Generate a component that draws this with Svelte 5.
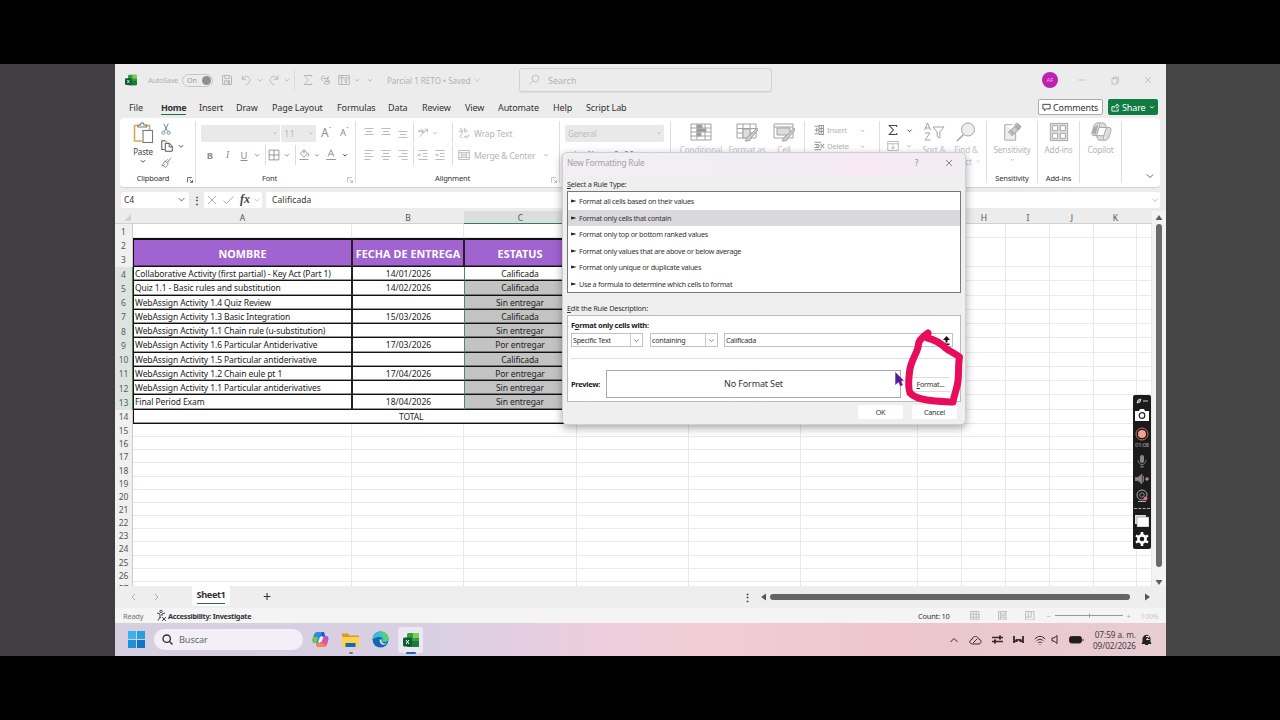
<script lang="ts">
  type Cell = { icon?: string; w: number; text?: string; tone?: string };

  const tabs = [
    { name: 'File', w: 32 },
    { name: 'Home', w: 38 },
    { name: 'Insert', w: 37 },
    { name: 'Draw', w: 36 },
    { name: 'Page Layout', w: 65 },
    { name: 'Formulas', w: 51 },
    { name: 'Data', w: 34 },
    { name: 'Review', w: 43 },
    { name: 'View', w: 33 },
    { name: 'Automate', w: 55 },
    { name: 'Help', w: 33 },
    { name: 'Script Lab', w: 50 },
  ];

  const quickTools: Cell[] = [
    { icon: 'save', w: 18 },
    { icon: 'undo', w: 20 },
    { icon: 'caret', w: 7 },
    { icon: 'redo', w: 21 },
    { icon: 'caret', w: 5 },
    { icon: 'sep', w: 10 },
    { icon: 'sigma', w: 17 },
    { icon: 'link', w: 20 },
    { icon: 'freeze', w: 16 },
    { icon: 'caret', w: 10 },
    { icon: 'caret', w: 16 },
  ];

  const fontRow: Cell[] = [
    { text: 'B', w: 18, tone: 'bold' },
    { text: 'I', w: 17, tone: 'italic' },
    { text: 'U', w: 16, tone: 'underline' },
    { icon: 'caret', w: 10 },
    { icon: 'sep', w: 7 },
    { icon: 'borders', w: 10, tone: 'mid' },
    { icon: 'caret', w: 15 },
    { icon: 'sep', w: 2 },
    { icon: 'bucket', w: 16, tone: 'mid' },
    { icon: 'caret', w: 10 },
    { icon: 'fontColor', w: 18, tone: 'mid' },
    { icon: 'caret', w: 9, tone: 'dark' },
  ];

  const alignRows: Cell[][] = [
    [
      { icon: 'alignTop', w: 17 },
      { icon: 'alignTop', w: 18 },
      { icon: 'alignBottom', w: 16 },
      { icon: 'sep', w: 4 },
      { icon: 'orient', w: 16 },
      { icon: 'caret', w: 8 },
      { w: 12 },
      { icon: 'sep', w: 3 },
      { icon: 'wrap', w: 20 },
      { text: 'Wrap Text', w: 60, tone: 'label' },
    ],
    [
      { icon: 'alignLeft', w: 17 },
      { icon: 'alignCenter', w: 18 },
      { icon: 'alignRight', w: 16 },
      { icon: 'sep', w: 4 },
      { icon: 'outdent', w: 16 },
      { icon: 'indent', w: 18 },
      { w: 2 },
      { icon: 'sep', w: 3 },
      { icon: 'merge', w: 20 },
      { text: 'Merge & Center', w: 66, tone: 'label' },
      { icon: 'caret', w: 12 },
    ],
  ];

  const columns = [
    { name: 'A', w: 219 },
    { name: 'B', w: 112 },
    { name: 'C', w: 113 },
    { name: 'D', w: 112 },
    { name: 'E', w: 112 },
    { name: 'F', w: 117 },
    { name: 'G', w: 44 },
    { name: 'H', w: 44 },
    { name: 'I', w: 44 },
    { name: 'J', w: 44 },
    { name: 'K', w: 43 },
    { name: '', w: 15 },
  ];
  const restColumns = columns.slice(3);

  const activities = [
    ['Collaborative Activity (first partial) - Key Act (Part 1)', '14/01/2026', 'Calificada'],
    ['Quiz 1.1 - Basic rules and substitution', '14/02/2026', 'Calificada'],
    ['WebAssign Activity 1.4 Quiz Review', '', 'Sin entregar'],
    ['WebAssign Activity 1.3 Basic Integration', '15/03/2026', 'Calificada'],
    ['WebAssign Activity 1.1 Chain rule (u-substitution)', '', 'Sin entregar'],
    ['WebAssign Activity 1.6 Particular Antiderivative', '17/03/2026', 'Por entregar'],
    ['WebAssign Activity 1.5 Particular antiderivative', '', 'Calificada'],
    ['WebAssign Activity 1.2 Chain eule pt 1', '17/04/2026', 'Por entregar'],
    ['WebAssign Activity 1.1 Particular antiderivatives', '', 'Sin entregar'],
    ['Final Period Exam', '18/04/2026', 'Sin entregar'],
  ];
  const emptyRows = Array.from({ length: 13 }, (_, i) => i + 15);

  const ruleTypes = [
    'Format all cells based on their values',
    'Format only cells that contain',
    'Format only top or bottom ranked values',
    'Format only values that are above or below average',
    'Format only unique or duplicate values',
    'Use a formula to determine which cells to format',
  ];
  let selectedRule = $state(1);

  // 16x16 stroke icons
  const icons: Record<string, string> = {
    caret: 'M5.5 7l2.5 2.5L10.500 7',
    chevron: 'M3 5.500l5 5 5-5',
    save: 'M2 2h10l2 2v10H2zM5 2v4h6V2M4.500 14V9h7v5M10 9v5M7 11h2',
    undo: 'M3 2v5h5M3 7c2-4 6-5 9-2s1 6-4 10',
    redo: 'M13 2v5H8M13 7c-2-4-6-5-9-2s-1 6 4 10',
    sigma: 'M13 4V2H3l5.500 6L3 14h10v-2',
    link: 'M6 3a3 3 0 1 0-2 6M4 6h7M9 4l2 2-2 2M10 8a3 3 0 1 1-3 4M13 10H7l2-2M6 13v-3M11 3v3',
    freeze: 'M1 2h14v12H1zM1 5h14M5 2v12M8 8h5M10.500 7v5M9 10.500l1.500 1.500 1.500-1.500',
    search: 'M10 1.500a4.500 4.500 0 1 1 0 9 4.500 4.500 0 0 1 0-9M6.500 9.500L1.500 14.500',
    scissors: 'M5 1l5 10M11 1L6 11M4.500 11a2 2 0 1 0 .1 0M11.500 11a2 2 0 1 0 .1 0',
    copy: 'M5 12H2V2h4l2 2M6 5h5l3 3v6H6zM10.500 5v4H14',
    brush: 'M14 2l-4 4M7 5l4 4M6 6l4 4-3 4-5-3c2-1 3-3 4-5M4 12l2-2M9 4l3 3',
    borders: 'M1.500 1.500h13v13h-13zM8 1.500v13M1.500 8h13',
    bucket: 'M8 1l5 5-5 5-5-5zM8 1v5M13 6c2 2 1 4 0 4M2 14h12',
    fontColor: 'M4 10L8 1l4 9M5.500 7h5M1.500 14h13',
    alignTop: 'M2 2h12M4 6h8M2 10h12',
    alignBottom: 'M2 6h12M4 10h8M2 14h12',
    alignLeft: 'M2 2h12M2 6h8M2 10h12M2 14h8',
    alignCenter: 'M2 2h12M4 6h8M2 10h12M4 14h8',
    alignRight: 'M2 2h12M6 6h8M2 10h12M6 14h8',
    outdent: 'M2 2h12M8 6h6M8 10h6M2 14h12M6 8H1M3 6L1 8l2 2',
    indent: 'M2 2h12M8 6h6M8 10h6M2 14h12M1 8h5M4 6l2 2-2 2',
    orient: 'M3 13L14 3M14 3h-4M14 3v4M2 7c0-4 4-4 4 0M2 6h4M7 3v5M7 5c3-1 3 3 0 3',
    wrap: 'M2 3c2-2 4 0 4 4H3c-2-1 0-3 3-2M9 1v6M9 4c4-1 4 3 0 3M6 10c-4-1-4 5 0 4M9 13h4c2 0 2-3 0-3M11 11l-2 2 2 2',
    merge: 'M1 2h14v12H1zM1 5h14M1 11h14M5 5v6M11 5v6M4 8h8',
    launcher: 'M3 13V3h9M7 7l6 6M13 8v5H8',
    insertCells: 'M2 3h5M2 8h3M2 13h5M8 2h6v12H8zM11 2v12M8 6h6M8 10h6M2 8h6M5 5v6',
    deleteCells: 'M2 3h9M2 6h6M2 10h6M2 13h9M4 8h6M10 5l5 6M15 5l-5 6',
    fill: 'M1 2h14v12H1zM1 5h14M8 6v6M5.500 9.500L8 12l2.500-2.500',
  };
</script>

{#snippet icon(name: string, size = 12, width = 1.2)}
  {#if name === 'sep'}
    <i class="sep"></i>
  {:else}
    <svg class="icon" width={size} height={size} viewBox="0 0 16 16" stroke-width={(width * 12) / size}>
      <path d={icons[name]} />
    </svg>
  {/if}
{/snippet}

{#snippet cells(list: Cell[])}
  {#each list as cell}
    <span class="cell {cell.tone ?? ''}" style:width="{cell.w}px">
      {#if cell.icon}{@render icon(cell.icon)}{:else}{cell.text ?? ''}{/if}
    </span>
  {/each}
{/snippet}

{#snippet excelLogo(size: number)}
  <svg width={size} height={size} viewBox="0 0 16 16">
    <rect x="4" y="1" width="12" height="14" rx="1.500" fill="#2f9e44" />
    <path d="M10 1h4.500A1.500 1.500 0 0 1 16 2.500V6h-6z" fill="#7bd24f" />
    <path d="M4 9h12v4.500a1.500 1.500 0 0 1-1.500 1.500h-9A1.500 1.500 0 0 1 4 13.500z" fill="#197a3a" />
    <rect x="0" y="5.500" width="9" height="9" rx="1.500" fill="#0d5c2d" />
    <path d="M3 8l3 4M6 8l-3 4" stroke="#fff" stroke-width="1" />
  </svg>
{/snippet}

{#snippet gridLines(cols: { name: string; w: number }[])}
  {#each cols as col}
    <span class="blank" style:width="{col.w}px"></span>
  {/each}
{/snippet}

<div class="stage">
  <main class="window">
    <header class="titlebar">
      <span class="app-logo">{@render excelLogo(12)}</span>
      <span class="autosave">AutoSave</span>
      <span class="toggle">On <b></b></span>
      <div class="quick">{@render cells(quickTools)}</div>
      <span class="doc-name">Parcial 1 RETO • Saved</span>
      <span class="doc-caret">{@render icon('chevron', 8, 0.8)}</span>
      <div class="search">{@render icon('search', 12, 1)}<span>Search</span></div>
      <span class="avatar">AF</span>
      <div class="controls">
        <svg viewBox="0 0 10 10"><path d="M1.500 5h7" /></svg>
        <svg viewBox="0 0 10 10"><path d="M2 3.500h5V9H2zM3.500 3.500V2h5v5.500H7" /></svg>
        <svg viewBox="0 0 10 10"><path d="M2 2l6 6M8 2L2 8" /></svg>
      </div>
    </header>

    <nav class="tabs">
      {#each tabs as tab}
        <span class="tab" style:width="{tab.w}px"><span class:active={tab.name === 'Home'}>{tab.name}</span></span>
      {/each}
      <button class="comments">
        <svg width="9" height="9" viewBox="0 0 10 10"><path d="M1 1.500h8v5H5L3 8.500v-2H1z" /></svg>Comments
      </button>
      <button class="share">
        <svg width="9" height="9" viewBox="0 0 10 10"><path d="M3.500 4H1v5h7V6.500M3.500 6c0-2 1-3 3-3V1L9 3.500 6.500 6V4.500" /></svg>Share
        {@render icon('caret', 12, 1.200)}
      </button>
    </nav>

    <section class="ribbon">
      <div class="group clipboard">
        <div class="body">
          <div class="paste">
            <svg width="21" height="22" viewBox="0 0 21 22" fill="none">
              <path d="M9 19H1.500V3.500H5M13 3.500h3.500V8" stroke="#dba65c" stroke-width="1.600" />
              <path d="M5 5V3h2.500c0-3 3.500-3 3.500 0H13.500v2z" stroke="#777" stroke-width="1.100" />
              <rect x="10" y="8.500" width="9.500" height="12" fill="#fff" stroke="#777" stroke-width="1.100" />
            </svg>
            <span>Paste</span>
            {@render icon('caret', 14)}
          </div>
          <div class="clip-tools">
            <span class="cut">{@render icon('scissors', 12)}</span>
            <span>{@render icon('copy', 14)}{@render icon('caret', 14)}</span>
            <span class="painter">{@render icon('brush', 13)}</span>
          </div>
        </div>
        <footer>Clipboard<span class="launch dark">{@render icon('launcher', 8, 0.9)}</span></footer>
      </div>

      <div class="group font">
        <div class="row fields">
          <span class="field family">{@render icon('caret', 10)}</span>
          <span class="field size">11{@render icon('caret', 10)}</span>
          <span class="grow">A<sup>ˆ</sup></span>
          <span class="grow small">A<sup>ˇ</sup></span>
        </div>
        <div class="row">{@render cells(fontRow)}</div>
        <footer>Font<span class="launch">{@render icon('launcher', 8, 0.9)}</span></footer>
      </div>

      <div class="group alignment">
        {#each alignRows as row}
          <div class="row">{@render cells(row)}</div>
        {/each}
        <footer>Alignment<span class="launch">{@render icon('launcher', 8, 0.9)}</span></footer>
      </div>

      <div class="group number">
        <div class="row fields"><span class="field general">General{@render icon('caret', 10)}</span></div>
        <div class="row money">$ &nbsp;&nbsp; % &nbsp; , &nbsp; .0 .00</div>
      </div>

      <div class="group styles">
        <span class="big">
          <svg width="22" height="20" viewBox="0 0 22 20"><path d="M1 2h20v16H1zM1 6h20M1 10h20M1 14h20M7 2v16M15 2v16" /><path d="M7 3h5v3H7zM7 7h9v2.500H7zM7 11h4v3H7z" fill="#999" /></svg>
          Conditional
        </span>
        <span class="big">
          <svg width="22" height="20" viewBox="0 0 22 20"><path d="M1 2h19v14H1zM1 6.500h19M1 11h19M7 2v14M14 2v14" /><path d="M7 7h7v9H7z" fill="#ddd" /><path d="M21 6l-8 8c-2 0-2 3-4 5 3 0 6 0 6-3l7-8z" fill="#ccc" /></svg>
          Format as
        </span>
        <span class="big">
          <svg width="22" height="20" viewBox="0 0 22 20"><path d="M1 2h19v14H1zM1 5h19" /><path d="M4 6h13v7H4z" fill="#ddd" /><path d="M21 6l-8 8c-2 0-2 3-4 5 3 0 6 0 6-3l7-8z" fill="#ccc" /></svg>
          Cell
        </span>
      </div>

      <div class="group cellops">
        <div class="line">{@render icon('insertCells', 12, 1.400)}<span>Insert</span>{@render icon('caret', 11)}</div>
        <div class="line">{@render icon('deleteCells', 12, 1.400)}<span>Delete</span>{@render icon('caret', 11)}</div>
      </div>

      <div class="group editing">
        <div class="edit-col">
          <div class="line dark">{@render icon('sigma', 12, 1.400)}{@render icon('caret', 13)}</div>
          <div class="line">{@render icon('fill', 12, 1.200)}{@render icon('caret', 12)}</div>
        </div>
        <span class="big sort">
          <svg width="22" height="20" viewBox="0 0 22 20"><path d="M1.500 8L4.500 1l3 7M2.500 6h4M2 11h5L2 18h5.500M10 5h11l-4.200 5v6l-2.600-1.500V10z" /></svg>
          Sort &amp;
        </span>
        <span class="big">
          <svg width="22" height="20" viewBox="0 0 22 20"><circle cx="13" cy="7.500" r="6.500" fill="#eee" /><path d="M8.500 12.500L2 19" stroke-width="1.500" /></svg>
          Find &amp;<span>Select {@render icon('caret', 8)}</span>
        </span>
      </div>

      <div class="group sensitivity">
        <span class="big">
          <svg width="22" height="22" viewBox="0 0 22 22"><path d="M3 3h8M15 11v9H3V3" fill="#eee" /><path d="M7 11l7-6 4 4-7 6zM13 4l3-3 5 4-3 4" fill="#ccc" /><path d="M9 9l4 4M15 4l4 4M17 2l3 4" stroke-width="1.600" /></svg>
          Sensitivity{@render icon('caret', 11)}
        </span>
        <footer>Sensitivity</footer>
      </div>

      <div class="group addins">
        <span class="big">
          <svg width="22" height="22" viewBox="0 0 22 22"><path d="M1.500 1.500h19v19h-19z" fill="#ddd" /><path d="M4 4h5.500v5.500H4zM12.500 4H18v5.500h-5.500zM4 12.500h5.500V18H4zM12.500 12.500H18V18h-5.500z" fill="#fff" /></svg>
          Add-ins
        </span>
        <footer>Add-ins</footer>
      </div>

      <div class="group copilot">
        <span class="big">
          <svg width="24" height="22" viewBox="0 0 24 22"><path d="M8 1h7c2 0 2 4 3 5h3c3 0 2 4 1 7s-2 7-5 7h-7c-2 0-2-3-3-5H4c-3 0-2-4-1-7s2-7 5-7z" fill="#ddd" /><path d="M10 6h8l-3 9H7zM10 6c1-3 0-5-2-5M15 15c-1 3 0 5 2 5" fill="#fff" /><path d="M4 6l-2 6 4 2 3-11z" fill="#aaa" stroke="none" /></svg>
          Copilot
        </span>
      </div>
      <span class="collapse">{@render icon('chevron', 10, 1.100)}</span>
    </section>

    <section class="formula">
      <div class="name-box">C4{@render icon('chevron', 9, 1)}</div>
      <span class="grip">⋮</span>
      <div class="fx">
        <svg width="10" height="10" viewBox="0 0 10 10"><path d="M1 1l8 8M9 1L1 9" /></svg>
        <svg width="11" height="10" viewBox="0 0 11 10"><path d="M0.500 5.500l3 3L10.500 1.500" /></svg>
        <em>fx</em>{@render icon('chevron', 8, 0.9)}
      </div>
      <div class="value">Calificada{@render icon('chevron', 8, 0.9)}</div>
    </section>

    <section class="sheet">
      <div class="grid">
        <div class="col-heads">
          <span class="corner"><svg width="7" height="7" viewBox="0 0 7 7"><path d="M7 0v7H0z" /></svg></span>
          {#each columns as col}
            <span class="col-head" class:picked={col.name === 'C'} style:width="{col.w}px">{col.name}</span>
          {/each}
        </div>
        <div class="line-row first">
          <span class="num">1</span>
          {@render gridLines(columns)}
        </div>
        <div class="line-row head">
          <span class="num double"><span>2</span><span>3</span></span>
          <span class="th name">NOMBRE</span>
          <span class="th date">FECHA DE ENTREGA</span>
          <span class="th state">ESTATUS</span>
          {@render gridLines(restColumns)}
        </div>
        {#each activities as [name, date, state], i}
          <div class="line-row item">
            <span class="num picked">{i + 4}</span>
            <span class="td name">{name}</span>
            <span class="td date">{date}</span>
            <span class="td state" class:shaded={i > 0}>{state}</span>
            {@render gridLines(restColumns)}
          </div>
        {/each}
        <div class="line-row total">
          <span class="num">14</span>
          <span class="td sum">TOTAL</span>
          {@render gridLines(restColumns)}
        </div>
        {#each emptyRows as n}
          <div class="line-row empty">
            <span class="num">{n}</span>
            {@render gridLines(columns)}
          </div>
        {/each}
      </div>
      <div class="vscroll">
        <svg width="8" height="6" viewBox="0 0 8 6"><path d="M4 0l3.500 5h-7z" /></svg>
        <i></i>
        <svg width="8" height="6" viewBox="0 0 8 6"><path d="M4 6L.5 1h7z" /></svg>
      </div>
    </section>

    <footer class="sheet-tabs">
      <svg width="30" height="8" viewBox="0 0 30 8"><path d="M5 1L2 4l3 3M25 1l3 3-3 3" /></svg>
      <span class="sheet-tab"><span>Sheet1</span></span>
      <span class="plus">+</span>
      <span class="dots">⋮</span>
      <div class="hscroll">
        <svg width="5" height="8" viewBox="0 0 5 8"><path d="M5 .5v7L0 4z" /></svg>
        <i></i>
        <svg width="5" height="8" viewBox="0 0 5 8"><path d="M0 .5v7L5 4z" /></svg>
      </div>
    </footer>

    <footer class="statusbar">
      <span class="ready">Ready</span>
      <svg width="11" height="11" viewBox="0 0 11 11"><circle cx="5" cy="1.500" r="1.200" /><path d="M1 3l3 1v3l-2 3.500M9 3L6 4v2M4 7l1 1M6 7l4 4M10 7l-4 4" /></svg>
      <span class="access">Accessibility: Investigate</span>
      <span class="count">Count: 10</span>
      <div class="views">
        <svg viewBox="0 0 10 10"><path d="M.5.500h9v9h-9zM.5 3.500h9M.5 6.500h9M3.500.500v9M6.500.500v9" /></svg>
        <svg viewBox="0 0 10 10"><path d="M.5.500h9v9h-9zM2.500 1v8M7.500 1v8M3 3h4M3 5h4M3 7h4" /></svg>
        <svg viewBox="0 0 10 10"><path d="M.5.500h9v9h-9zM3.500 1v5.500h3V1M1 6.500h2.500" /></svg>
      </div>
      <div class="zoom">
        <span>−</span>
        <svg width="68" height="5" viewBox="0 0 68 5"><path d="M0 2.500h68M34.500 0.500v4" /></svg>
        <span>+</span>
      </div>
      <span class="percent">100%</span>
    </footer>

    <footer class="taskbar">
      <svg class="start" width="17" height="17" viewBox="0 0 17 17">
        <path d="M0 0h8v8H0z" fill="#35b5ea" /><path d="M9 0h8v8H9z" fill="#249fe0" />
        <path d="M0 9h8v8H0z" fill="#1d91d8" /><path d="M9 9h8v8H9z" fill="#0f76c6" />
      </svg>
      <div class="find">
        <svg width="11" height="11" viewBox="0 0 11 11"><circle cx="4.700" cy="4.700" r="3.700" /><path d="M7.500 7.500L10.500 10.500" /></svg>Buscar
      </div>
      <div class="apps">
        <span>
          <svg width="17" height="17" viewBox="0 0 17 17">
            <path d="M6 1h5c1.500 0 1.500 2 2 4H9L6.500 12H3C0 12 0 9 1.500 5S4 1 6 1z" fill="#2a8ee0" />
            <path d="M1.200 6h5L4.500 12H3C0 12 0 9 1.200 6z" fill="#79c74a" />
            <path d="M11 1c1.500 0 1.500 2 2 4H9l1-4z" fill="#2457c5" />
            <path d="M11 16H6c-1.500 0-1.500-2-2-4h4l2.500-7H14c3 0 3 3 1.500 7S13 16 11 16z" fill="#e0569a" />
            <path d="M11 16H6c-1.500 0-1.500-2-2-4h4.500l5 1.500c-1 2-1.500 2.500-2.500 2.500z" fill="#f58a4c" />
            <path d="M10.500 5H14c2 0 2.500 1.500 2.200 3.500L9.500 8z" fill="#a15be0" />
            <path d="M8 6h3.500L9.500 11H6z" fill="#f3eaf4" />
          </svg>
        </span>
        <span class="running">
          <svg width="17" height="16" viewBox="0 0 17 16">
            <path d="M0 1.500h6l1.500 2H17V15H0z" fill="#dd9c21" /><path d="M0 5h17v10H0z" fill="#fbd253" />
            <path d="M3.500 11h10v4h-10z" fill="#1569b5" />
          </svg>
        </span>
        <span>
          <svg width="17" height="17" viewBox="0 0 17 17">
            <circle cx="8.500" cy="8.500" r="8" fill="#1565b8" />
            <path d="M.5 8C1 3 5 .5 9 .5c5 0 8 4 7.500 7.500-.5 3-4 3.500-6.500 2.500 2-3-1-5-4-4.500S1.500 8 .5 8z" fill="#35bfd0" />
            <path d="M11 1c4 1 6 5 5.500 7-.5 3-4 3.500-6.500 2.500C12 8 12 4 7 3z" fill="#54cf7c" />
            <path d="M10 8.500c-2 3 2 5 5.500 3.500-1 1-3 2-5 1.500S7 10 8 8.500z" fill="#e4eef6" />
          </svg>
        </span>
        <span class="current">{@render excelLogo(16)}</span>
      </div>
      <div class="tray">
        <svg width="10" height="8" viewBox="0 0 10 8"><path d="M1.500 6L5 2.500 8.500 6" /></svg>
        <svg width="13" height="10" viewBox="0 0 13 10"><path d="M3.500 9C0 9 0 5 3 4.500 4 0 9 1 9.500 4c3.500 0 3 5 .5 5zM4 8l4-4" /></svg>
        <svg width="11" height="9" viewBox="0 0 11 9"><path d="M0 2.500h11M0 6.500h11" stroke-width="1.500" /><path d="M8 .5v4M3 4.500v4" stroke-width="2" /></svg>
        <svg width="11" height="9" viewBox="0 0 11 9"><path d="M1 1v7M10 1v7M3.500 4v3M7.500 4v3" stroke-width="1.800" /><path d="M1 7l4.500-2.500L10 7" stroke-width="1.500" /></svg>
        <svg width="12" height="10" viewBox="0 0 12 10"><path d="M.8 4C4 .5 8 .5 11.200 4M2.500 6c2-2.200 5-2.200 7 0M4.300 7.800c1-1 2.400-1 3.400 0M6 9v.5" /></svg>
        <svg width="9" height="9" viewBox="0 0 9 9"><path d="M1 3h2l3-2.500v8L3 6H1z" /></svg>
        <svg width="15" height="8" viewBox="0 0 15 8"><rect x=".5" y=".5" width="12" height="6.500" rx="2" fill="#211a1e" /><path d="M14 3v2" /></svg>
      </div>
      <div class="clock"><span>07:59 a. m.</span><span>09/02/2026</span></div>
      <svg class="bell" width="11" height="12" viewBox="0 0 11 12"><path d="M2 8V5c0-5 7-5 7 0v3l1 1.500H1zM4 10.500h3" fill="#222" /><path d="M5 2.500h3L5.500 5.500h3" stroke="#e9cfd4" /></svg>
    </footer>

    <div class="dialog" role="dialog" aria-label="New Formatting Rule">
      <header>
        <span>New Formatting Rule</span><span class="help">?</span>
        <svg width="8" height="8" viewBox="0 0 8 8"><path d="M1 1l6 6M7 1L1 7" /></svg>
      </header>
      <p class="caption"><u>S</u>elect a Rule Type:</p>
      <ul>
        {#each ruleTypes as rule, i}
          <li>
            <button class:selected={selectedRule === i} onclick={() => (selectedRule = i)}>
              <svg width="5" height="4" viewBox="0 0 6 5"><path d="M0 .5l6 1.800v.4L0 4.500z" /></svg>{rule}
            </button>
          </li>
        {/each}
      </ul>
      <p class="caption edit"><u>E</u>dit the Rule Description:</p>
      <div class="rule-box">
        <p class="strong">F<u>o</u>rmat only cells with:</p>
        <div class="inputs">
          <span class="combo">Specific Text<b>{@render icon('chevron', 7, 0.8)}</b></span>
          <span class="combo second">containing<b>{@render icon('chevron', 7, 0.8)}</b></span>
          <span class="text-input">Calificada
            <svg width="7" height="9" viewBox="0 0 7 9"><path d="M3.500 0L7 4H4.500v2.500h-2V4H0zM.5 7.500h6V9h-6z" /></svg>
          </span>
        </div>
        <hr />
        <div class="preview">
          <span class="strong">Preview:</span>
          <span class="sample">No Format Set</span>
          <button><span><u>F</u>ormat...</span></button>
        </div>
      </div>
      <div class="actions"><button>OK</button><button>Cancel</button></div>
    </div>

    <aside class="recorder">
      <svg width="12" height="6" viewBox="0 0 12 6"><path d="M1 5l1-3 3-1-1 3zM7 3h5" stroke="#ccc" fill="#888" /></svg>
      <svg width="14" height="12" viewBox="0 0 14 12"><path d="M0 2h4l1-2h4l1 2h4v10H0z" fill="#fff" /><circle cx="7" cy="6.500" r="2.800" fill="#fff" stroke="#222" stroke-width="1.200" /></svg>
      <svg width="14" height="14" viewBox="0 0 14 14"><circle cx="7" cy="7" r="6" fill="none" stroke="#c9705f" /><circle cx="7" cy="7" r="4" fill="#f0a18f" /></svg>
      <span>01:08</span>
      <svg width="10" height="14" viewBox="0 0 10 14"><rect x="3" y="1" width="4" height="8" rx="2" fill="#888" /><path d="M1 6c0 6 8 6 8 0M5 10.500V13M3 13h4" fill="none" stroke="#777" /></svg>
      <svg width="14" height="10" viewBox="0 0 14 10"><path d="M0 3.500h3L7 0v10L3 6.500H0zM8.500 2v6" fill="#888" stroke="#777" /><path d="M10 5h4M12 3v4" stroke="#e8a5a5" /></svg>
      <svg width="13" height="14" viewBox="0 0 13 14"><circle cx="6" cy="6" r="5" fill="none" stroke="#aaa" /><circle cx="6" cy="6" r="2.200" fill="none" stroke="#888" /><path d="M2 12.500h8" stroke="#aaa" /><circle cx="9.500" cy="9.500" r="2" fill="#e07080" /></svg>
      <hr />
      <svg width="14" height="12" viewBox="0 0 14 12"><path d="M0 0h11v9H0z" fill="#ddd" /><path d="M2 2h12v10H2z" fill="#fff" stroke="#777" stroke-width=".5" /></svg>
      <svg width="14" height="14" viewBox="0 0 14 14"><circle cx="7" cy="7" r="3.600" fill="none" stroke="#fff" stroke-width="2.600" /><path d="M7 0v3M7 11v3M1 3.500l2.500 1.500M10.500 9l2.500 1.500M1 10.500L3.500 9M10.500 5L13 3.500" stroke="#fff" stroke-width="2.600" /></svg>
    </aside>

    <!-- hand-drawn mark around the Format button -->
    <svg class="ink" width="70" height="84" viewBox="900 325 70 84">
      <path d="M928 333c-4 3-9 6-9.500 11 0 8-8 16-9 28-1 8-1.500 16 .5 21 4 4 10 6 17 7 9 1.500 17 1.500 26 2 1-7 4-13 5-21 1-8 0-16 1.500-24-5-4-9-5-14-9-5-5-10-8-18-10" />
    </svg>
    <svg class="pointer" width="9" height="15" viewBox="0 0 9 15"><path d="M.5.500v12l3-2.500 2 4 2-1-1.500-4 2.500-.5z" /></svg>
  </main>
</div>

<style>
  :global(body) {
    margin: 0;
    background: #000;
  }

  .stage {
    box-sizing: border-box;
    width: 1280px;
    height: 720px;
    padding: 0 115px;
    border: solid #000;
    border-width: 64px 0;
    background: linear-gradient(90deg, #403e41 0 50%, #454545 50%);
    font-family: 'Noto Sans', 'Open Sans', sans-serif;
    color: #333;
    overflow: hidden;
  }

  .window {
    position: relative;
    display: flex;
    flex-direction: column;
    width: 1051px;
    height: 592px;
    background: #ececed;
    overflow: hidden;
  }

  button {
    font: inherit;
    color: inherit;
    letter-spacing: inherit;
    padding: 0;
    border: 0;
    background: none;
  }

  p,
  ul,
  hr {
    margin: 0;
    padding: 0;
  }

  svg {
    flex: none;
  }

  .icon,
  .controls svg,
  .tabs svg,
  .big svg,
  .fx svg,
  .views svg {
    fill: none;
    stroke: currentColor;
  }

  .sep {
    width: 1px;
    height: 20px;
    background: #dcdcdc;
  }

  .cell {
    flex: none;
    display: flex;
    justify-content: center;
    align-items: center;
    white-space: nowrap;
  }

  .cell.label {
    justify-content: flex-start;
    letter-spacing: -0.15px;
  }

  .mid {
    color: #8d8d8d;
  }

  .dark {
    color: #444;
  }

  .bold {
    font-weight: 700;
  }

  .italic {
    font-style: italic;
    font-family: 'Liberation Serif', serif;
  }

  .underline {
    text-decoration: underline;
  }

  /* title bar */
  .titlebar {
    display: flex;
    align-items: center;
    height: 32px;
    flex: none;
    font-size: 8px;
    color: #b2b2b2;
  }

  .app-logo {
    width: 22px;
    margin-left: 10px;
    display: flex;
  }

  .autosave {
    width: 35px;
    margin-left: 1px;
    margin-right: -1px;
    font-size: 7.500px;
    letter-spacing: -0.35px;
  }

  .toggle {
    box-sizing: border-box;
    width: 31px;
    height: 13px;
    border: 1px solid #c6c6c6;
    border-radius: 7px;
    display: flex;
    align-items: center;
    justify-content: space-between;
    padding: 0 1px 0 4px;
    font-size: 7px;
    color: #999;
  }

  .toggle b {
    width: 9px;
    height: 9px;
    border-radius: 50%;
    background: #8e8e8e;
  }

  .quick {
    display: flex;
    width: 164px;
    margin-left: 5px;
    color: #b2b2b2;
  }

  .doc-name {
    width: 86px;
    margin-left: 5px;
    white-space: nowrap;
    letter-spacing: 0.02px;
  }

  .doc-caret {
    width: 46px;
    display: flex;
  }

  .search {
    box-sizing: border-box;
    width: 253px;
    height: 24px;
    border: 1px solid #d2d2d2;
    border-radius: 3px;
    box-shadow: 0 1px 1px #ddd;
    display: flex;
    align-items: center;
    gap: 8px;
    padding-left: 8px;
    font-size: 9px;
  }

  .avatar {
    width: 16px;
    height: 16px;
    margin-left: 270px;
    border-radius: 50%;
    background: #bb23ae;
    color: #f3a8ea;
    font-size: 6px;
    line-height: 16px;
    text-align: center;
  }

  .controls {
    display: flex;
    gap: 23px;
    margin-left: 19px;
  }

  .controls svg {
    width: 10px;
    height: 10px;
    stroke-width: 0.7;
  }

  /* tabs */
  .tabs {
    display: flex;
    align-items: center;
    height: 22px;
    flex: none;
    padding-left: 14px;
    font-size: 9px;
    letter-spacing: -0.12px;
  }

  .tab {
    flex: none;
    white-space: nowrap;
    line-height: 15px;
  }

  .tab span {
    display: inline-block;
    height: 15px;
    box-sizing: border-box;
  }

  .active {
    font-weight: 700;
    letter-spacing: -0.35px;
    border-bottom: 1.500px solid #217346;
  }

  .comments,
  .share {
    box-sizing: border-box;
    flex: none;
    height: 16px;
    border-radius: 2px;
    display: flex;
    align-items: center;
    gap: 2px;
  }

  .comments {
    width: 65px;
    margin-left: 402px;
    padding-left: 3px;
    border: 1px solid #aaa;
    background: #fff;
  }

  .share {
    width: 50px;
    margin-left: 5px;
    padding-left: 3px;
    background: #107c41;
    color: #fff;
  }

  .share .icon {
    margin-left: -2px;
  }

  /* ribbon */
  .ribbon {
    display: flex;
    flex: none;
    height: 69px;
    margin: 0 6px 0 5px;
    border-radius: 4px;
    background: #fff;
    border-bottom: 1px solid #d4d4d4;
    box-sizing: content-box;
    font-size: 8.500px;
    color: #b5b5b5;
  }

  .group {
    box-sizing: border-box;
    position: relative;
    flex: none;
    display: flex;
    flex-direction: column;
    height: 62px;
    margin-top: 3px;
    padding-top: 1px;
    border-right: 1px solid #dedede;
  }

  .group footer {
    display: flex;
    justify-content: center;
    margin-top: auto;
    line-height: 10px;
    font-size: 7.500px;
    letter-spacing: -0.18px;
    color: #333;
  }

  .launch {
    position: absolute;
    right: 1px;
    bottom: -1px;
    display: flex;
    color: #aaa;
  }

  .launch.dark {
    color: #333;
  }

  .row {
    display: flex;
    align-items: center;
    height: 22px;
  }

  .clipboard {
    width: 76px;
  }

  .clipboard footer {
    padding-right: 9px;
  }

  .clipboard .body {
    display: flex;
    color: #444;
  }

  .paste {
    display: flex;
    flex-direction: column;
    align-items: center;
    width: 28px;
    margin-left: 9px;
    line-height: 13px;
    font-size: 8px;
    letter-spacing: -0.2px;
  }

  .paste svg:first-child {
    margin-bottom: 1px;
  }

  .paste .icon {
    margin-top: -4px;
  }

  .clip-tools {
    display: flex;
    flex-direction: column;
    gap: 4px;
    margin-left: 3px;
  }

  .clip-tools span {
    display: flex;
    height: 13px;
    align-items: center;
  }

  .cut {
    color: #4f7f8c;
  }

  .painter {
    color: #888;
  }

  .font {
    width: 160px;
    padding-left: 5px;
  }

  .fields {
    gap: 1px;
  }

  .field {
    box-sizing: border-box;
    display: flex;
    align-items: center;
    justify-content: space-between;
    height: 17px;
    background: #e9e9e9;
    border-radius: 2px;
    padding-left: 3px;
    color: #bcbcbc;
  }

  .family {
    width: 79px;
    justify-content: flex-end;
  }

  .size {
    width: 35px;
  }

  .grow {
    margin-left: 4px;
    width: 13px;
    font-size: 12px;
    line-height: 14px;
    color: #8d8d8d;
  }

  .grow.small {
    font-size: 9.500px;
    margin-left: 5px;
  }

  .grow sup {
    font-size: 7px;
    line-height: 0;
  }

  .font .row {
    color: #8d8d8d;
    font-size: 9.500px;
  }

  .font footer {
    padding-right: 17px;
  }

  .alignment {
    width: 204px;
    padding-left: 4px;
  }

  .alignment footer {
    padding-right: 14px;
  }

  .number {
    width: 111px;
    padding-left: 5px;
  }

  .general {
    width: 99px;
    font-size: 8px;
    letter-spacing: -0.15px;
  }

  .money {
    margin-top: -1px;
    padding-left: 8px;
    font-size: 9px;
    color: #777;
  }

  .styles {
    width: 134px;
    flex-direction: row;
    padding-left: 7px;
  }

  .big {
    display: flex;
    flex-direction: column;
    align-items: center;
    width: 46px;
    line-height: 12px;
    font-size: 8.200px;
    letter-spacing: -0.15px;
    white-space: nowrap;
  }

  .big > svg:first-child {
    height: 20px;
    margin-bottom: 2px;
    color: #a2a2a2;
  }

  .styles .big,
  .editing .big {
    color: #c6c6c6;
  }

  .styles .big:last-child {
    width: 28px;
  }

  .cellops {
    width: 75px;
    padding-left: 8px;
  }

  .line {
    display: flex;
    align-items: center;
    height: 18px;
    margin-top: -1px;
    font-size: 7.800px;
    letter-spacing: -0.3px;
  }

  .line + .line {
    margin-top: -2px;
  }

  .line.dark {
    color: #444;
  }

  .cellops .line span {
    width: 30px;
    padding-left: 2px;
  }

  .cellops .line .icon:first-child {
    color: #999;
  }

  .editing {
    width: 107px;
    flex-direction: row;
    padding-left: 7px;
  }

  .edit-col {
    width: 31px;
  }

  .edit-col .line {
    gap: 4px;
  }

  .editing .big {
    width: 32px;
  }

  .sensitivity {
    width: 51px;
  }

  .sensitivity .big {
    width: 50px;
  }

  .sensitivity .icon {
    margin-top: -2px;
  }

  .addins {
    width: 42px;
  }

  .addins .big,
  .copilot .big {
    width: 41px;
  }

  .copilot {
    width: 42px;
  }

  .collapse {
    margin: auto 5px 4px auto;
    color: #444;
  }

  /* formula bar */
  .formula {
    display: flex;
    flex: none;
    align-items: center;
    height: 23px;
    padding: 0 6px 0 6px;
    font-size: 8.500px;
  }

  .formula > div {
    box-sizing: border-box;
    display: flex;
    align-items: center;
    height: 16px;
    background: #fff;
    border-radius: 2px;
  }

  .name-box {
    width: 68px;
    padding: 0 3px;
    justify-content: space-between;
    letter-spacing: -0.2px;
  }

  .grip {
    width: 15px;
    text-align: center;
    font-weight: 700;
    font-size: 10px;
  }

  .fx {
    width: 58px;
    padding: 0 2px 0 3px;
    gap: 6px;
    color: #b0b0b0;
  }

  .fx em {
    font: italic bold 12px 'Liberation Serif', serif;
    color: #444;
  }

  .fx .icon {
    margin-left: -3px;
  }

  .value {
    flex: 1;
    margin-left: 4px;
    padding: 0 1px 0 6px;
    justify-content: space-between;
    letter-spacing: 0.1px;
  }

  .value .icon {
    color: #999;
  }

  /* sheet */
  .sheet {
    display: flex;
    flex: none;
    height: 375px;
    overflow: hidden;
  }

  .grid {
    width: 1037px;
    flex: none;
    background: #fff;
  }

  .col-heads,
  .line-row {
    display: flex;
  }

  .col-heads {
    box-sizing: border-box;
    height: 13px;
    background: #ececec;
    border-bottom: 1px solid #d0d0d0;
    font-size: 8.500px;
    color: #555;
  }

  .corner {
    width: 18px;
    display: flex;
    align-items: flex-end;
    justify-content: flex-end;
    padding-bottom: 2px;
    box-sizing: border-box;
    fill: #d2d2d2;
  }

  .corner svg {
    margin-right: 2px;
  }

  .col-head {
    box-sizing: border-box;
    height: 13px;
    line-height: 13px;
    text-align: center;
  }

  .col-head.picked {
    background: #dcdddd;
    border-bottom: 1px solid #2f8055;
  }

  .num {
    box-sizing: border-box;
    flex: none;
    width: 18px;
    display: flex;
    align-items: center;
    justify-content: center;
    background: #f0f0f0;
    border-right: 1px solid #ccc;
    font-size: 8.500px;
    color: #555;
  }

  .num.double {
    flex-direction: column;
    justify-content: space-around;
  }

  .num.picked {
    background: #dfe3e0;
    border-right-color: #4d8c69;
    color: #4c6457;
  }

  .blank {
    box-sizing: border-box;
    flex: none;
    border-right: 1px solid #e9e9e6;
    border-bottom: 1px solid #e9e9e9;
  }

  .first {
    height: 14px;
  }

  .head {
    height: 29px;
  }

  .item {
    height: 14.250px;
  }

  .total {
    height: 14.500px;
  }

  .empty {
    height: 13.170px;
  }

  .th,
  .td {
    box-sizing: border-box;
    flex: none;
    display: flex;
    align-items: center;
    justify-content: center;
    border-right: 2px solid #222;
    border-bottom: 1px solid #111;
    box-shadow: inset 0 -1px rgba(0, 0, 0, 0.4);
    white-space: nowrap;
    color: #222;
    font-size: 8.500px;
    letter-spacing: -0.1px;
  }

  .th {
    border-top: 2px solid #111;
    background: #a163d0;
    color: #fff;
    font-weight: 700;
    font-size: 10.800px;
    letter-spacing: 0.05px;
  }

  .name {
    width: 220px;
    border-left: 1px solid #111;
  }

  .date {
    width: 112px;
  }

  .state {
    width: 112px;
  }

  .td.name {
    justify-content: flex-start;
    padding-left: 1px;
  }

  .td.date {
    letter-spacing: 0.02px;
    border-right: 1px solid #4d8c69;
  }

  .shaded {
    background: #c3c3c3;
  }

  .sum {
    width: 444px;
    justify-content: flex-start;
    padding-left: 265px;
    border-left: 1px solid #111;
  }

  .vscroll {
    width: 14px;
    background: #f3f3f3;
    display: flex;
    flex-direction: column;
    align-items: center;
    padding-top: 4px;
    gap: 3px;
    fill: #5d5d5d;
  }

  .vscroll i {
    width: 6px;
    height: 343px;
    border-radius: 3px;
    background: #6a6a6a;
  }

  .vscroll svg:last-child {
    margin-top: 9px;
  }

  /* sheet tabs and status bar */
  .sheet-tabs {
    display: flex;
    align-items: center;
    flex: none;
    height: 22px;
    background: #eee;
    font-size: 9.200px;
  }

  .sheet-tabs > svg {
    margin: 0 37px 0 15px;
    fill: none;
    stroke: #aaa;
  }

  .sheet-tab {
    box-sizing: border-box;
    width: 38px;
    height: 20px;
    margin: -2px 0 0 -5px;
    padding-top: 1px;
    text-align: center;
    background: #fff;
    border-radius: 2px;
    font-weight: 700;
    letter-spacing: -0.4px;
  }

  .sheet-tab span {
    display: inline-block;
    line-height: 15px;
    height: 16px;
    border-bottom: 1px solid #217346;
  }

  .plus {
    width: 20px;
    margin: -2px 0 0 27px;
    text-align: center;
    font-size: 14px;
  }

  .dots {
    margin-left: 464px;
    width: 12px;
    text-align: center;
    font-weight: 700;
    font-size: 11px;
  }

  .hscroll {
    display: flex;
    align-items: center;
    margin-left: 8px;
    fill: #555;
  }

  .hscroll i {
    width: 360px;
    height: 6px;
    margin: 0 15px 0 4px;
    border-radius: 3px;
    background: #646464;
  }

  .statusbar {
    display: flex;
    align-items: center;
    flex: none;
    height: 15px;
    background: #f4f4f4;
    font-size: 7.500px;
    letter-spacing: -0.25px;
    white-space: nowrap;
  }

  .statusbar > svg {
    margin-right: 1px;
    fill: none;
    stroke: #444;
  }

  .ready {
    width: 33px;
    margin-left: 8px;
    color: #777;
  }

  .access {
    width: 750px;
    font-weight: 700;
    font-size: 7.300px;
    letter-spacing: -0.28px;
  }

  .count {
    width: 52px;
  }

  .views {
    display: flex;
    gap: 18px;
  }

  .views svg {
    width: 9.500px;
    height: 9.500px;
    stroke: #bbb;
  }

  .zoom {
    display: flex;
    align-items: center;
    gap: 4px;
    margin-left: 12px;
    color: #aaa;
  }

  .zoom svg {
    fill: none;
    stroke: #999;
  }

  .percent {
    margin-left: 10px;
    color: #ccc;
  }

  /* taskbar */
  .taskbar {
    display: flex;
    align-items: center;
    flex: none;
    height: 33px;
    background: linear-gradient(90deg, #d6cfe0, #d9cfe3 30%, #e8cde0 42%, #f2cdd6 55%, #ecc6cc 75%, #e7cdd2);
  }

  .start {
    margin-left: 13px;
  }

  .find {
    box-sizing: border-box;
    width: 149px;
    height: 21px;
    margin-left: 9px;
    padding-left: 8px;
    display: flex;
    align-items: center;
    gap: 6px;
    border-radius: 11px;
    background: #f3eff9;
    font-size: 9.200px;
    letter-spacing: -0.1px;
    color: #666;
  }

  .find svg {
    fill: none;
    stroke: #333;
    stroke-width: 1.400;
  }

  .apps {
    display: flex;
    gap: 5px;
    margin-left: 5px;
  }

  .apps span {
    position: relative;
    width: 25px;
    height: 26px;
    display: flex;
    align-items: center;
    justify-content: center;
    border-radius: 3px;
  }

  .running::after,
  .current::after {
    content: '';
    position: absolute;
    bottom: -1px;
    width: 4px;
    height: 2px;
    border-radius: 1px;
    background: #777;
  }

  .apps .current {
    background: #ece7f2;
  }

  .current::after {
    width: 10px;
    background: #1668b8;
  }

  .tray {
    display: flex;
    align-items: center;
    margin-left: auto;
    gap: 10px;
    fill: none;
    stroke: #33292e;
  }

  .tray svg:nth-child(6) {
    margin-left: -5px;
  }

  .tray svg:nth-child(7) {
    margin-left: -1px;
  }

  .clock {
    width: 52px;
    display: flex;
    flex-direction: column;
    align-items: flex-end;
    line-height: 11px;
    font-size: 8.200px;
    letter-spacing: -0.05px;
    color: #453b42;
    white-space: nowrap;
  }

  .bell {
    margin: 0 14px 0 5px;
    stroke: #222;
  }

  /* dialog over the sheet */
  .dialog {
    position: absolute;
    left: 447px;
    top: 88px;
    box-sizing: border-box;
    width: 404px;
    height: 273px;
    padding: 0 4px;
    border: 1px solid #cfcfcf;
    border-radius: 5px;
    background: linear-gradient(90deg, #f1eff4, #f0edf3 50%, #f7e9f5 75%, #f2edf2) 0 0 / 100% 24px no-repeat, #efeff0;
    box-shadow: 0 3px 9px rgba(0, 0, 0, 0.35);
    font-size: 7.200px;
    letter-spacing: -0.25px;
  }

  .dialog header {
    display: flex;
    align-items: center;
    height: 19px;
    font-size: 8.200px;
    letter-spacing: -0.2px;
    color: #a2a2a5;
  }

  .dialog header svg {
    margin: 0 8px 0 27px;
    fill: none;
    stroke: #888;
  }

  .help {
    margin-left: auto;
    color: #888;
  }

  .caption {
    height: 19px;
    line-height: 25px;
    font-size: 7.400px;
  }

  .dialog ul {
    box-sizing: border-box;
    height: 102px;
    border: 1px solid #777;
    background: #fff;
    list-style: none;
  }

  li {
    height: 16.500px;
  }

  li:first-child {
    padding-top: 1px;
  }

  li button {
    width: 100%;
    height: 16.500px;
    display: flex;
    align-items: center;
    gap: 3px;
    padding-left: 3px;
    color: #333;
  }

  li svg {
    fill: #222;
  }

  .selected {
    background: #d9d9dc;
  }

  .caption.edit {
    height: 22px;
    line-height: 31px;
  }

  .rule-box {
    box-sizing: border-box;
    height: 87px;
    border: 1px solid #bbb;
    padding: 4px 7px 0 3px;
    background: #fff;
  }

  .strong {
    font-weight: 700;
    color: #222;
    line-height: 11px;
    font-size: 7.500px;
    letter-spacing: -0.3px;
  }

  .inputs {
    display: flex;
    margin-top: 2px;
  }

  .combo,
  .text-input {
    box-sizing: border-box;
    display: flex;
    align-items: center;
    justify-content: space-between;
    width: 72px;
    height: 14px;
    padding-left: 1px;
    border: 1px solid #c2c2c2;
    background: #fff;
  }

  .combo b {
    display: flex;
    align-items: center;
    justify-content: center;
    width: 11px;
    height: 12px;
    border-left: 1px solid #ccc;
  }

  .combo.second {
    width: 68px;
    margin: 0 6px 0 7px;
  }

  .text-input {
    flex: 1;
    padding-right: 2px;
  }

  .text-input svg {
    fill: #111;
  }

  .rule-box hr {
    margin: 11px -2px 11px 0;
    border: 0;
    border-top: 1px solid #ddd;
  }

  .preview {
    display: flex;
    align-items: center;
  }

  .preview .strong {
    width: 35px;
  }

  .sample {
    box-sizing: border-box;
    width: 295px;
    height: 28px;
    line-height: 26px;
    border: 1px solid #aaa;
    text-align: center;
    font-size: 9px;
    letter-spacing: -0.15px;
  }

  .preview button {
    width: 39px;
    height: 15px;
    margin-left: 10px;
    border: 1px solid #ddd;
    border-width: 1px 0;
  }

  .actions {
    display: flex;
    justify-content: flex-end;
    gap: 9px;
    padding: 3px 4px 0 0;
  }

  .actions button {
    width: 45px;
    height: 14px;
    background: #fff;
    border-radius: 2px;
  }

  .recorder {
    position: absolute;
    left: 1018px;
    top: 331px;
    box-sizing: border-box;
    width: 18px;
    height: 154px;
    padding: 3px 0;
    border-radius: 2px;
    background: #1b1b1b;
    display: flex;
    flex-direction: column;
    align-items: center;
    justify-content: space-between;
    font-size: 6px;
    letter-spacing: -0.3px;
    line-height: 7px;
    color: #aaa;
  }

  .recorder span {
    margin-top: -4px;
  }

  .recorder hr {
    width: 16px;
    border: 0;
    border-top: 1px dashed #aaa;
  }

  .ink {
    position: absolute;
    left: 785px;
    top: 261px;
    fill: none;
    stroke: #e80d5c;
    stroke-width: 7;
    stroke-linecap: round;
    stroke-linejoin: round;
  }

  .pointer {
    position: absolute;
    left: 780px;
    top: 308px;
    fill: #5b1a94;
    stroke: #7a3db0;
    stroke-width: 0.600;
  }
</style>
